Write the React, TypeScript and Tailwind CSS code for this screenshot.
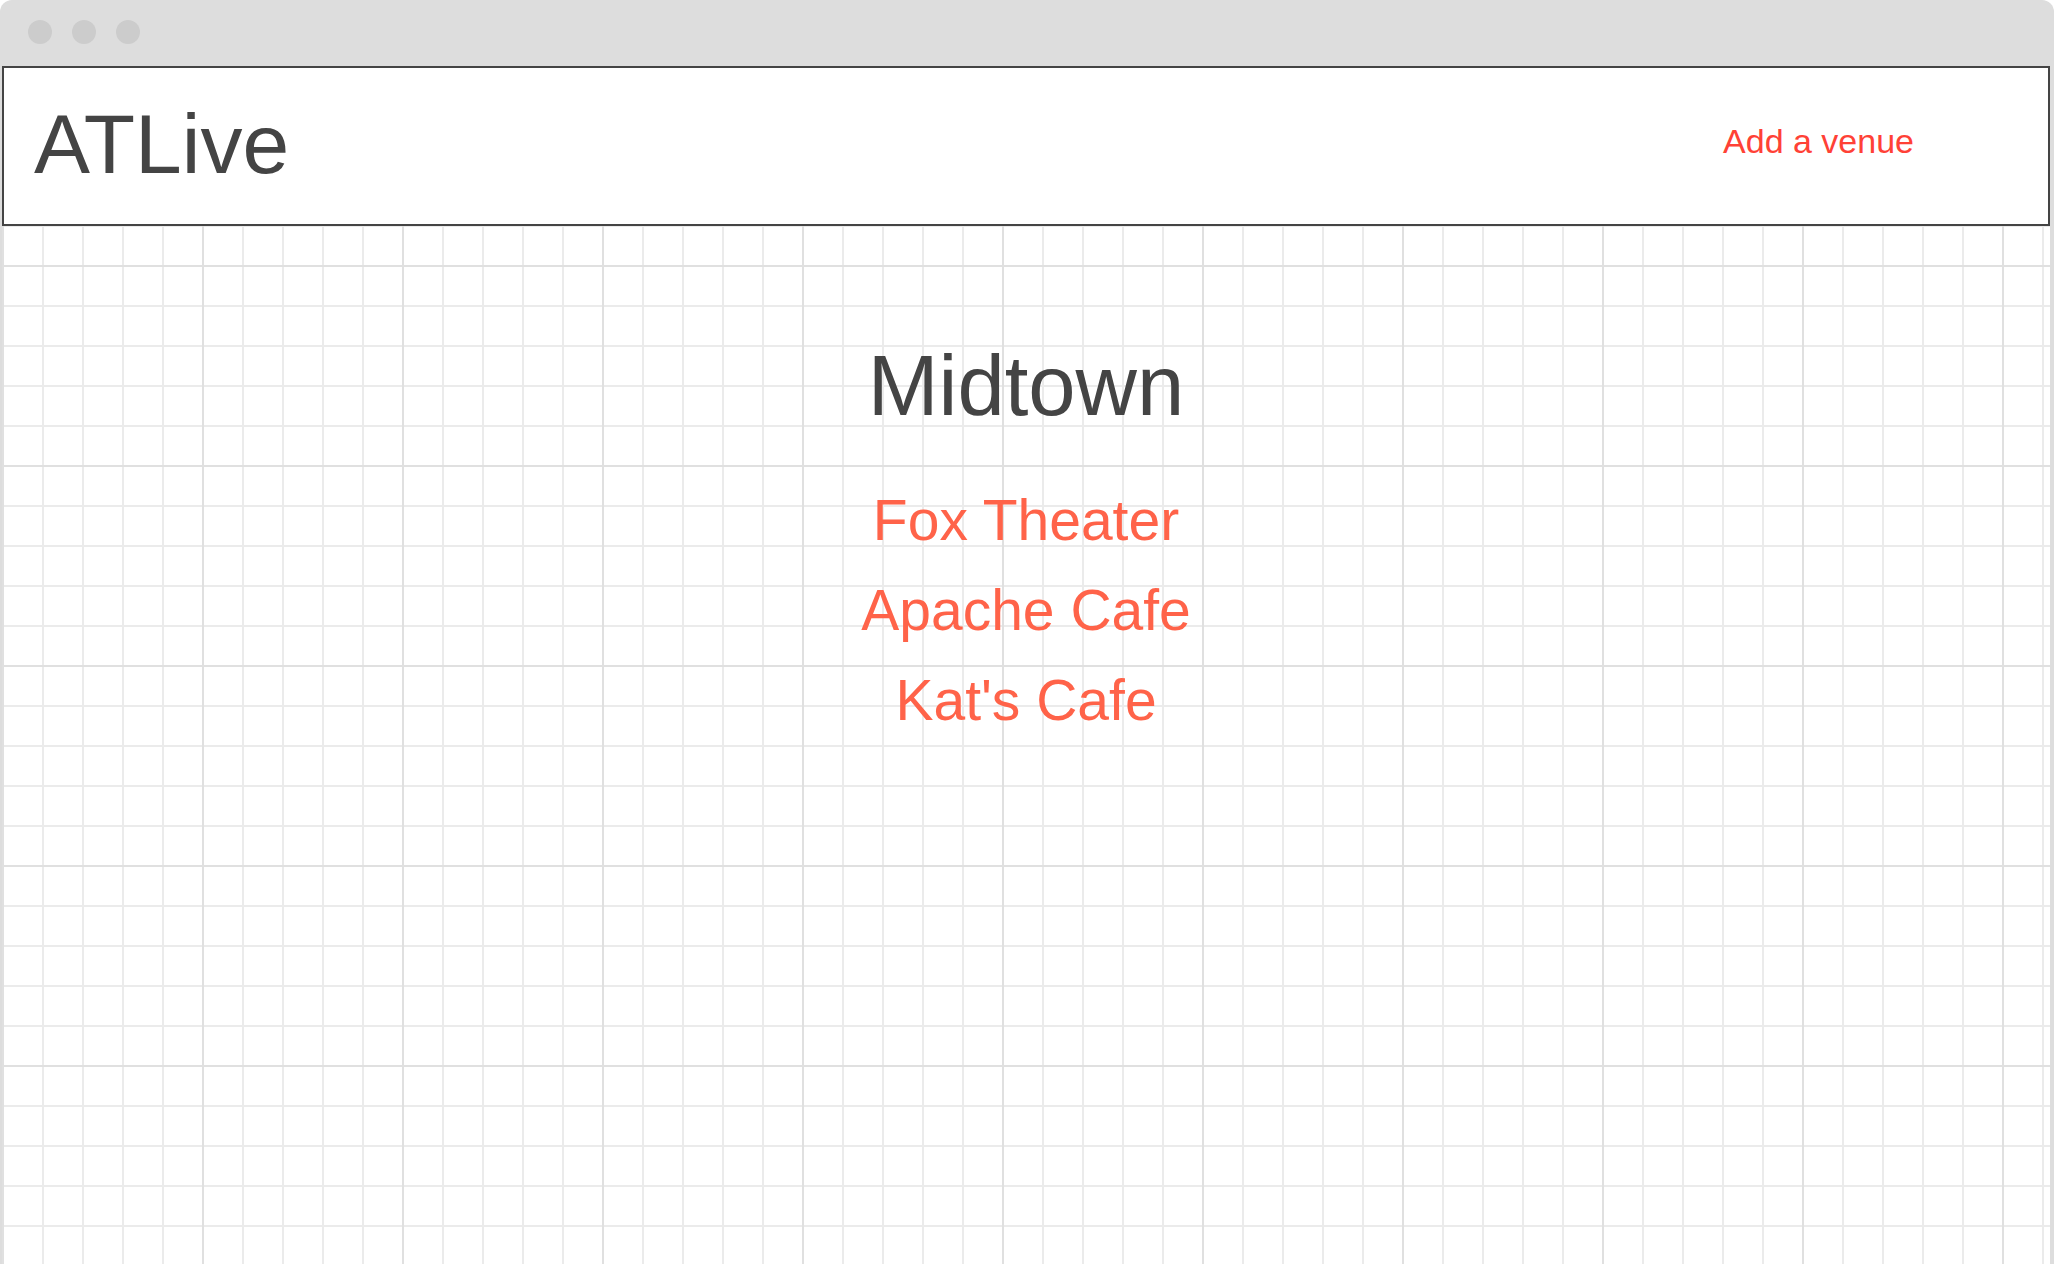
const venues = ["Fox Theater", "Apache Cafe", "Kat's Cafe"];

function WindowDots() {
  return (
    <div className="flex h-[66px] items-start gap-[20px] pl-[26px] pt-[20px]">
      <span className="h-[24px] w-[24px] rounded-full bg-[#cccccc]" />
      <span className="h-[24px] w-[24px] rounded-full bg-[#cccccc]" />
      <span className="h-[24px] w-[24px] rounded-full bg-[#cccccc]" />
    </div>
  );
}

function Header() {
  return (
    <header className="flex h-[160px] items-center border-2 border-[#444444] bg-white pl-[30px] pr-[134px]">
      <h1 className="mb-[4px] text-[84px] leading-none text-[#444444]">ATLive</h1>
      <a href="#" className="mb-[10px] ml-auto text-[34px] leading-none text-[#ff4136]">
        Add a venue
      </a>
    </header>
  );
}

export default function App() {
  return (
    <div className="flex h-screen flex-col overflow-hidden rounded-t-[12px] bg-[#dddddd] pl-[2px] pr-[4px] font-['Liberation_Sans',Arial,sans-serif]">
      <WindowDots />
      <div className="flex flex-1 flex-col bg-white bg-[linear-gradient(to_right,#e0e0e0_2px,transparent_2px),linear-gradient(to_bottom,#e0e0e0_2px,transparent_2px),linear-gradient(to_right,#ebebeb_2px,transparent_2px),linear-gradient(to_bottom,#ebebeb_2px,transparent_2px)] bg-[size:200px_200px,200px_200px,40px_40px,40px_40px] bg-[position:0_-1px]">
        <Header />
        <main className="flex flex-col items-center pt-[110px]">
          <h2 className="text-[85px] leading-[100px] text-[#444444]">Midtown</h2>
          <ul className="mt-[39px] flex flex-col items-center">
            {venues.map((v) => (
              <li key={v}>
                <a href="#" className="text-[57px] leading-[90px] text-[#ff6349]">
                  {v}
                </a>
              </li>
            ))}
          </ul>
        </main>
      </div>
    </div>
  );
}
